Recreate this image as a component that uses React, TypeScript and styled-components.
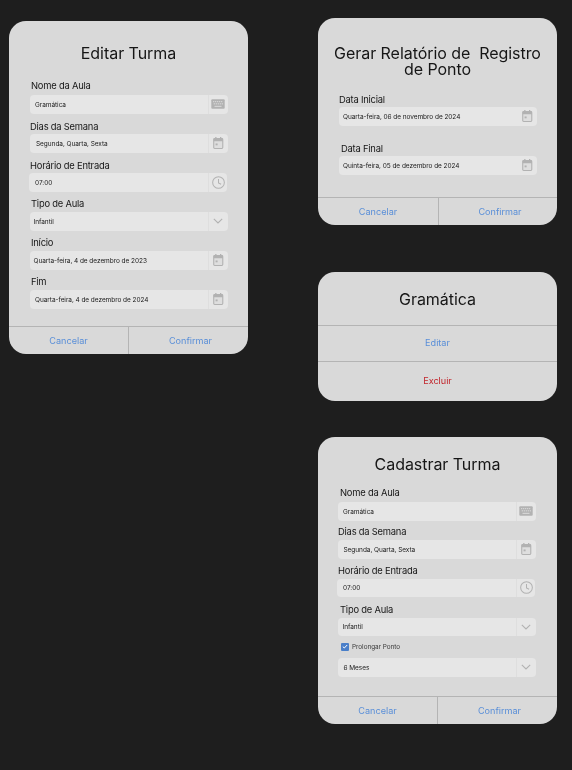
import React from "react";
import styled, { createGlobalStyle } from "styled-components";

const Global = createGlobalStyle`
  html, body { margin: 0; padding: 0; background: #1e1e1e; }
  * { box-sizing: border-box; }
  body { font-family: Inter, "Liberation Sans", sans-serif; }
`;

const Canvas = styled.div`
  width: 572px;
  height: 770px;
  overflow: hidden;
  background: #1e1e1e;
  display: grid;
  grid-template-columns: 239px 239px;
  column-gap: 70px;
  padding-left: 9px;
  align-items: start;
  filter: blur(0.3px);
`;

const Column = styled.div<{ $top: number }>`
  display: flex;
  flex-direction: column;
  padding-top: ${(p) => p.$top}px;
`;

const Card = styled.section<{ $height: number; $after?: number }>`
  display: flex;
  flex-direction: column;
  height: ${(p) => p.$height}px;
  margin-bottom: ${(p) => p.$after ?? 0}px;
  background: #d9d9d9;
  border-radius: 17px;
  overflow: hidden;
`;

const Title = styled.h2<{ $height: number; $pad?: number }>`
  margin: 0;
  height: ${(p) => p.$height}px;
  padding: ${(p) => p.$pad ?? 0}px 10px 0;
  display: flex;
  align-items: center;
  justify-content: center;
  text-align: center;
  white-space: pre-wrap;
  font-size: 16px;
  letter-spacing: -0.05px;
  line-height: 16px;
  font-weight: 400;
  color: #161616;
`;

const Form = styled.div<{ $x: number }>`
  flex: 1;
  display: flex;
  flex-direction: column;
  padding-left: ${(p) => p.$x}px;
  width: ${(p) => p.$x + 200}px;
`;

const Field = styled.div<{ $height: number }>`
  height: ${(p) => p.$height}px;
  display: flex;
  flex-direction: column;
  justify-content: flex-end;
`;

const Label = styled.label<{ $x?: number; $lift?: number }>`
  display: block;
  font-size: 9.4px;
  letter-spacing: -0.22px;
  line-height: 11px;
  padding-left: ${(p) => p.$x ?? 0}px;
  margin-bottom: ${(p) => p.$lift ?? 2}px;
  color: #161616;
`;

const Input = styled.div<{ $shift?: number }>`
  display: flex;
  flex: 0 0 18.5px;
  height: 18.5px;
  width: 197.5px;
  margin-left: ${(p) => p.$shift ?? 0}px;
  background: #e6e6e6;
  border-radius: 4px;
  overflow: hidden;
`;

const Value = styled.span<{ $x: number }>`
  flex: 1;
  display: flex;
  align-items: center;
  padding: 1px 0 0 ${(p) => p.$x}px;
  font-size: 6.5px;
  letter-spacing: -0.05px;
  color: #1a1a1a;
  white-space: nowrap;
`;

const Addon = styled.span<{ $plain?: boolean; $narrow?: boolean }>`
  flex: 0 0 ${(p) => (p.$narrow ? 18.5 : 19.5)}px;
  padding-left: ${(p) => (p.$narrow ? 2 : 0)}px;
  display: flex;
  align-items: center;
  justify-content: center;
  border-left: 1px solid ${(p) => (p.$plain ? "transparent" : "#dedede")};
`;

const CheckRow = styled.div`
  display: flex;
  flex: 0 0 11px;
  align-items: center;
  gap: 3px;
  height: 11px;
  margin: 5px 0 6px 3px;
  font-size: 6.4px;
  letter-spacing: -0.03px;
  color: #3a3a3a;
`;

const Check = styled.span`
  width: 8px;
  height: 8px;
  border-radius: 1px;
  background: #4a7fc9;
  display: flex;
  align-items: center;
  justify-content: center;
`;

const Footer = styled.div<{ $split: number }>`
  flex: 0 0 28px;
  display: grid;
  grid-template-columns: ${(p) => p.$split}px 1fr;
  border-top: 1px solid #b4b4b4;
`;

const Action = styled.button<{ $danger?: boolean; $divider?: boolean }>`
  display: flex;
  align-items: center;
  justify-content: center;
  width: 100%;
  padding: 0 0 1px ${(p) => (p.$divider ? 4 : 0)}px;
  background: none;
  border: 0;
  border-left: ${(p) => (p.$divider ? "1px solid #b4b4b4" : "0")};
  font-family: inherit;
  font-size: 9.1px;
  color: ${(p) => (p.$danger ? "#c2272d" : "#5a8fd8")};
`;

const MenuRow = styled.div<{ $height: number }>`
  height: ${(p) => p.$height}px;
  padding-bottom: 1.5px;
  border-top: 1px solid #b4b4b4;
  display: flex;
`;

const G = "#b2b2b2";

const KeyboardIcon = () => (
  <svg width="14" height="10" viewBox="0 0 14 10">
    <rect x="0.3" y="0.3" width="13.4" height="9.4" rx="1" fill={G} />
    {[2, 4, 6, 8, 10].map((x) => (
      <rect key={x} x={x} y="2" width="1.3" height="1.2" fill="#d4d4d4" />
    ))}
    {[2, 4, 6, 8, 10].map((x) => (
      <rect key={x} x={x + 0.7} y="4.2" width="1.3" height="1.2" fill="#d4d4d4" />
    ))}
    <rect x="3.5" y="6.8" width="7" height="1.2" fill="#d4d4d4" />
  </svg>
);

const CalendarIcon = () => (
  <svg width="10.5" height="12" viewBox="0 0 11 13">
    <rect x="0.6" y="1.6" width="9.8" height="10.8" rx="1" fill="#dedede" stroke={G} strokeWidth="1.2" />
    <path d="M0.5 2.5a1 1 0 0 1 1-1h8a1 1 0 0 1 1 1v2.2h-10z" fill={G} />
    <rect x="2.2" y="0" width="1.4" height="2.5" fill={G} />
    <rect x="7.4" y="0" width="1.4" height="2.5" fill={G} />
    <rect x="2.6" y="7" width="2.2" height="2" fill={G} />
  </svg>
);

const ClockIcon = () => (
  <svg width="13" height="13" viewBox="0 0 14 14" fill="none" stroke={G} strokeWidth="1.1">
    <circle cx="7" cy="7" r="6.3" />
    <path d="M7 3.2V7.4L9.8 8.8" />
  </svg>
);

const ChevronIcon = () => (
  <svg width="10" height="6" viewBox="0 0 10 6" fill="none" stroke={G} strokeWidth="1.1">
    <path d="M0.8 0.8L5 5L9.2 0.8" />
  </svg>
);

const TickIcon = () => (
  <svg width="6" height="5" viewBox="0 0 6 5" fill="none" stroke="#fff" strokeWidth="1">
    <path d="M0.8 2.6L2.3 4L5.2 1" />
  </svg>
);

const icons = {
  keyboard: <KeyboardIcon />,
  calendar: <CalendarIcon />,
  clock: <ClockIcon />,
  chevron: <ChevronIcon />,
};

type RowProps = {
  label: string;
  value: string;
  icon: keyof typeof icons;
  height: number;
  labelX?: number;
  lift?: number;
  shift?: number;
  valueX: number;
  plain?: boolean;
};

const Row = ({ label, value, icon, height, labelX, lift, shift, valueX, plain }: RowProps) => (
  <Field $height={height}>
    <Label $x={labelX} $lift={lift}>{label}</Label>
    <Input $shift={shift}>
      <Value $x={valueX}>{value}</Value>
      <Addon $plain={plain} $narrow={Boolean(shift)}>{icons[icon]}</Addon>
    </Input>
  </Field>
);

const Buttons = ({ split }: { split: number }) => (
  <Footer $split={split}>
    <Action>Cancelar</Action>
    <Action $divider>Confirmar</Action>
  </Footer>
);

export default function App() {
  return (
    <>
      <Global />
      <Canvas>
        <Column $top={21}>
          <Card $height={333}>
            <Title $height={55} $pad={9}>Editar Turma</Title>
            <Form $x={21}>
              <Row height={37.5} label="Nome da Aula" value="Gramática" icon="keyboard" labelX={1} lift={4} valueX={5} />
              <Row height={39} label="Dias da Semana" value="Segunda, Quarta, Sexta" icon="calendar" lift={2.5} valueX={6} />
              <Row height={39} label="Horário de Entrada" value="07:00" icon="clock" lift={2.5} shift={-1} valueX={6} />
              <Row height={39} label="Tipo de Aula" value="Infantil" icon="chevron" labelX={1} lift={3} valueX={3.5} />
              <Row height={39} label="Início" value="Quarta-feira, 4 de dezembro de 2023" icon="calendar" labelX={1} lift={3} valueX={3.5} />
              <Row height={39} label="Fim" value="Quarta-feira, 4 de dezembro de 2024" icon="calendar" labelX={1} lift={3} valueX={5} />
            </Form>
            <Buttons split={119} />
          </Card>
        </Column>
        <Column $top={18}>
          <Card $height={207} $after={47}>
            <Title $height={60} $pad={26}>{"Gerar Relatório de  Registro de Ponto"}</Title>
            <Form $x={21}>
              <Row height={47.5} label="Data Inicial" value="Quarta-feira, 06 de novembro de 2024" icon="calendar" labelX={0} lift={2} valueX={4} plain />
              <Row height={49} label="Data Final" value="Quinta-feira, 05 de dezembro de 2024" icon="calendar" labelX={2} lift={2} valueX={4} plain />
            </Form>
            <Buttons split={120} />
          </Card>
          <Card $height={129} $after={36}>
            <Title $height={53}>Gramática</Title>
            <MenuRow $height={36}><Action>Editar</Action></MenuRow>
            <MenuRow $height={40}><Action $danger>Excluir</Action></MenuRow>
          </Card>
          <Card $height={287}>
            <Title $height={46} $pad={8}>Cadastrar Turma</Title>
            <Form $x={20}>
              <Row height={37.5} label="Nome da Aula" value="Gramática" icon="keyboard" labelX={2} lift={4} valueX={5} />
              <Row height={38} label="Dias da Semana" value="Segunda, Quarta, Sexta" icon="calendar" lift={3} valueX={5.5} />
              <Row height={38.5} label="Horário de Entrada" value="07:00" icon="clock" lift={3} shift={-1} valueX={6} />
              <Row height={39} label="Tipo de Aula" value="Infantil" icon="chevron" labelX={2} lift={3} valueX={4.5} />
              <CheckRow>
                <Check><TickIcon /></Check>
                Prolongar Ponto
              </CheckRow>
              <Input>
                <Value $x={5.5}>6 Meses</Value>
                <Addon>{icons.chevron}</Addon>
              </Input>
            </Form>
            <Buttons split={119} />
          </Card>
        </Column>
      </Canvas>
    </>
  );
}
